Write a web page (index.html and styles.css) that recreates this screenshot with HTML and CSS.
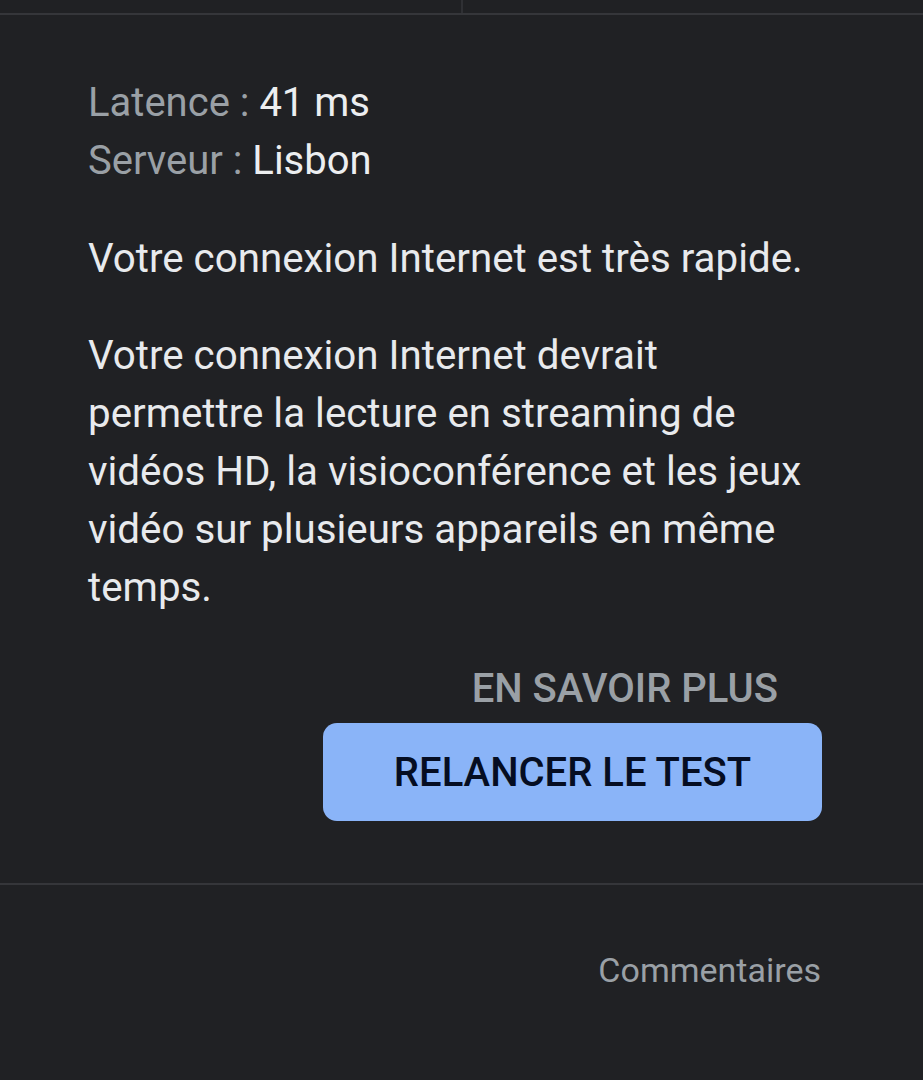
FILE: index.html
```html
<!DOCTYPE html>
<html lang="fr">
<head>
<meta charset="utf-8">
<link rel="stylesheet" href="styles.css">
</head>
<body>
<div class="tabs">
  <div class="tab"></div>
  <div class="tab tab-right"></div>
</div>
<main class="result">
  <div class="stats">
    <div class="stat"><span class="label">Latence : </span><span class="value">41 ms</span></div>
    <div class="stat"><span class="label">Serveur : </span><span class="value">Lisbon</span></div>
  </div>
  <p class="summary">Votre connexion Internet est très rapide.</p>
  <p class="detail">Votre connexion Internet devrait permettre la lecture en streaming de vidéos HD, la visioconférence et les jeux vidéo sur plusieurs appareils en même temps.</p>
  <div class="actions">
    <a class="link-btn">EN SAVOIR PLUS</a>
    <button class="primary-btn">RELANCER LE TEST</button>
  </div>
</main>
<footer class="footer">
  <a class="feedback">Commentaires</a>
</footer>
</body>
</html>
```

FILE: styles.css
```css
html, body {
  margin: 0;
  padding: 0;
  background: #202124;
}
body {
  font-family: Roboto, "Liberation Sans", sans-serif;
  color: #e8eaed;
  width: 923px;
  height: 1080px;
  overflow: hidden;
}
.tabs {
  display: flex;
  height: 13px;
  border-bottom: 2px solid #35363a;
}
.tab {
  width: 461px;
}
.tab-right {
  flex: 1;
  border-left: 2px solid #2f3034;
}
.result {
  padding: 59px 101px 62px 88px;
  border-bottom: 2px solid #35363a;
}
.stats {
  font-size: 40px;
  line-height: 58px;
}
.label {
  color: #9aa0a6;
}
.value {
  color: #eceef0;
}
.summary, .detail {
  margin: 40px 0 0;
  font-size: 40.3px;
  line-height: 58px;
}
.detail {
  margin-top: 39px;
}
.actions {
  margin-top: 43px;
  display: flex;
  flex-direction: column;
  align-items: flex-end;
}
.link-btn {
  font-size: 40px;
  line-height: 58px;
  font-weight: 500;
  color: #9aa0a6;
  margin-right: 44px;
}
.primary-btn {
  margin-top: 5px;
  width: 499px;
  height: 98px;
  border: none;
  border-radius: 14px;
  background: #8ab4f8;
  color: #050d22;
  font-family: Roboto, "Liberation Sans", sans-serif;
  font-size: 40px;
  font-weight: 500;
  padding: 0;
}
.footer {
  display: flex;
  justify-content: flex-end;
  padding: 60px 102px 0 0;
}
.feedback {
  font-size: 34px;
  line-height: 50px;
  color: #9aa0a6;
}
```
